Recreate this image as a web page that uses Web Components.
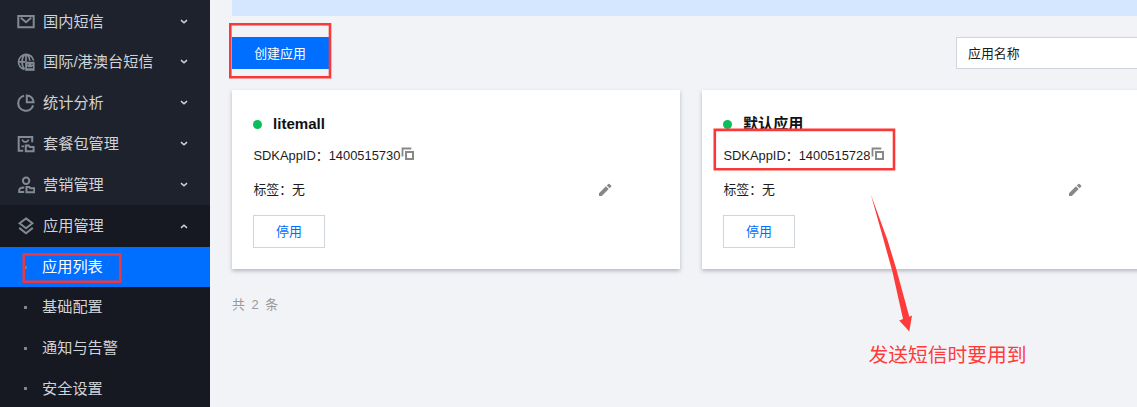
<!DOCTYPE html>
<html lang="zh-CN">
<head>
<meta charset="utf-8">
<title>应用列表</title>
<style>
body{margin:0;width:1137px;height:407px;overflow:hidden;background:#f2f3f7;font-family:"Liberation Sans","Noto Sans CJK SC",sans-serif;font-size:12.9px;color:#1c1c1c}
</style>
</head>
<body>
<sms-console></sms-console>
<script>
function define(name, html){
  const t=document.createElement('template');
  t.innerHTML=html;
  customElements.define(name,class extends HTMLElement{
    constructor(){super();this.attachShadow({mode:'open'}).append(t.content.cloneNode(true));}
  });
}

const ICONS={
  mail:'<path d="M1.3 3h15.4v11.2H1.3z"/><path d="M3.8 4.8L9 9.2l5.2-4.4"/>',
  globe:'<path d="M16.6 7.6A7.6 7.6 0 1 0 7.4 16.4M1.4 8.9H8M7.8 1.4C4.2 5 4.2 12.6 7.6 16.4M10 1.4c1.8 1.8 2.6 3.9 2.8 6.4M9 1.2v7.5" stroke-width="1.7"/><path d="M8.2 8.8h9.4v9H8.2z" fill="currentColor" stroke="none"/><path d="M10.4 11.2h1.2M14.4 11.2h1.2M10.6 13.4v1.4h4.8v-1.4" stroke="var(--bg)" stroke-width="1.1"/>',
  pie:'<path d="M7.1 1.8A7.6 7.6 0 1 0 16.1 11.4" stroke-width="2.1"/><path d="M9.8 1.5v6.7h6.8A6.8 6.8 0 0 0 9.8 1.5z"/>',
  pack:'<path d="M6.2 15.8H1.7V2h13.5v5.2"/><path d="M5.2 4.4c.6 1.8 1.6 2.5 3.2 2.5s2.6-.7 3.2-2.5M4.5 11.4h2.6" stroke-width="1.7"/><path d="M8.8 10.5h3l1 1.5h3.8v4.3H8.8z"/>',
  user:'<circle cx="9.1" cy="4.7" r="3.2"/><path d="M7.2 15.9H2.2v-1.6c0-1.9 1.6-2.9 5.1-2.9"/><path d="M9.5 10.9h2.8l1 1.4h4v4H9.5z"/>',
  layers:'<path d="M9 1.4l6.4 4.9L9 11.2 2.6 6.3z M2.2 10.9L9 16.2l6.8-5.3"/>'
};
customElements.define('menu-icon',class extends HTMLElement{
  constructor(){super();this.attachShadow({mode:'open'});}
  connectedCallback(){
    this.shadowRoot.innerHTML=`<style>:host{display:block;width:18px;height:18px;color:#828a92;--bg:#1e222d}svg{display:block}</style>
    <svg width="18" height="18" viewBox="0 0 18 18" fill="none" stroke="currentColor" stroke-width="2">${ICONS[this.getAttribute('name')]}</svg>`;
  }
});

define('menu-group',`<style>
:host{display:flex;align-items:center;height:40.85px;padding:0 22px 0 17px;color:#d2d3d6;font-size:15.2px}
span{margin-left:8px;flex:1;white-space:nowrap;line-height:20px}
svg{display:block;width:8px;height:6px}
:host([open]) svg{transform:rotate(180deg)}
:host([open]){height:41.6px}
</style><slot name="icon"></slot><span><slot></slot></span>
<svg viewBox="0 0 8 6" fill="none" stroke="#d0d2d5" stroke-width="1.5"><path d="M1 1.1l3 2.7 3-2.7"/></svg>`);

define('menu-leaf',`<style>
:host{display:flex;align-items:center;height:40.75px;padding-left:24px;color:#d2d3d6;font-size:15.2px}
:host([active]){background:#006eff;color:#fff;height:40px}
i{width:3px;height:3px;background:#7f858c;margin-right:15px}
:host([active]) i{background:#4b8bc0}
span{line-height:20px}
</style><i></i><span><slot></slot></span>`);

define('side-menu',`<style>
:host{display:block;box-sizing:border-box;width:210px;height:407px;padding-top:1.2px;background:#1e222d;flex:none}
section{background:#161822;height:210px}
</style>
<menu-group><menu-icon slot="icon" name="mail"></menu-icon>国内短信</menu-group>
<menu-group><menu-icon slot="icon" name="globe"></menu-icon>国际/港澳台短信</menu-group>
<menu-group><menu-icon slot="icon" name="pie"></menu-icon>统计分析</menu-group>
<menu-group><menu-icon slot="icon" name="pack"></menu-icon>套餐包管理</menu-group>
<menu-group><menu-icon slot="icon" name="user"></menu-icon>营销管理</menu-group>
<section>
<menu-group open><menu-icon slot="icon" name="layers"></menu-icon>应用管理</menu-group>
<menu-leaf active>应用列表</menu-leaf>
<menu-leaf>基础配置</menu-leaf>
<menu-leaf>通知与告警</menu-leaf>
<menu-leaf>安全设置</menu-leaf>
</section>`);

define('tea-button',`<style>
:host{display:flex;align-items:center;justify-content:center;box-sizing:border-box;width:72px;height:33px;padding-bottom:2px;border:1px solid #cfd5de;background:#fff;color:#006eff}
:host([primary]){width:97px;height:32px;border:0;padding:0 1px 2px 0;background:#006eff;color:#fff}
</style><slot></slot>`);

define('name-filter',`<style>
:host{display:flex;align-items:center;box-sizing:border-box;width:201px;height:32px;border:1px solid #cfd5de;background:#fff;padding:0 0 2px 11px}
</style><slot></slot>`);

define('app-card',`<style>
:host{display:block;box-sizing:border-box;width:448px;height:179px;flex:none;background:#fff;padding:23px 21px 0;box-shadow:0 2px 4px rgba(54,58,80,.32)}
div{display:flex;align-items:center;white-space:nowrap}
.t{height:22px;font-weight:bold;font-size:15.1px;line-height:22px;color:#111}
.t i{width:9px;height:9px;border-radius:50%;background:#0abf5b;margin:1px 11px 0 0}
.t slot{display:block;height:22px}
:host([cjk]) .t slot{height:23px}
.s{height:20px;margin-top:9px}
.s span,.l span{padding-left:.4px}
.s svg{margin:0 0 0 1px}
.l{height:20px;margin-top:14px;justify-content:space-between;padding-right:47px}
.l svg{margin-top:4px}
tea-button{margin-top:17px}
</style>
<div class="t"><i></i><slot name="title"></slot></div>
<div class="s"><span>SDKAppID：<slot name="id"></slot></span><svg width="14" height="14" viewBox="0 0 14 14" fill="none" stroke="#888" stroke-width="2"><path d="M1.5 9.5v-8h8.8" stroke-width="1.8"/><path d="M5 5h7v7H5z"/></svg></div>
<div class="l"><span>标签：无</span><svg width="14" height="14" viewBox="0 0 14 14" fill="#888"><path d="M1 10.2l6.9-6.9 2.8 2.8L3.8 13H1zM8.8 2.4l1.5-1.5q.6-.5 1.2 0l1.6 1.6q.5.6 0 1.2l-1.5 1.5z"/></svg></div>
<tea-button>停用</tea-button>`);

define('mark-up',`<style>
:host{position:absolute;inset:0;pointer-events:none}
svg{position:absolute;inset:0}
span{position:absolute;left:868.5px;top:341px;font-size:19.75px;line-height:28px;color:#fd3b3b;white-space:nowrap}
</style>
<svg width="1137" height="407" fill="none" stroke="#fb3838" stroke-width="2.6">
<path d="M230.3 24.3h99.7v52.9h-99.7z"/>
<path d="M714.8 129.9h179.2v39.4h-179.2z"/>
<path d="M23.8 254.4h96.4v27.4H23.8z" stroke="#ea3841"/>
<path d="M870.8 194.5L887.5 240 896 268 909.3 316.8 912 315.6 909.3 331.5 899.2 320.5 903 319 892.5 272 882.5 236z" fill="#fd3b3b" stroke="none"/>
</svg><span>发送短信时要用到</span>`);

define('sms-console',`<style>
:host{display:flex;position:relative;width:1137px;height:407px;overflow:hidden}
main{flex:1;min-width:0;padding-left:22px}
.banner{height:15.5px;background:#d5e7ff}
.bar{display:flex;justify-content:space-between;margin-top:21.5px;height:32px;width:925px}
.cards{display:flex;gap:22px;margin-top:21px}
p{margin:26px 0 0;line-height:20px;color:#999;word-spacing:3px}
</style>
<side-menu></side-menu>
<main>
<div class="banner"></div>
<div class="bar"><tea-button primary>创建应用</tea-button><name-filter>应用名称</name-filter></div>
<div class="cards">
<app-card><span slot="title">litemall</span><span slot="id">1400515730</span></app-card>
<app-card cjk><span slot="title">默认应用</span><span slot="id">1400515728</span></app-card>
</div>
<p>共 2 条</p>
</main>
<mark-up></mark-up>`);
</script>
</body>
</html>
